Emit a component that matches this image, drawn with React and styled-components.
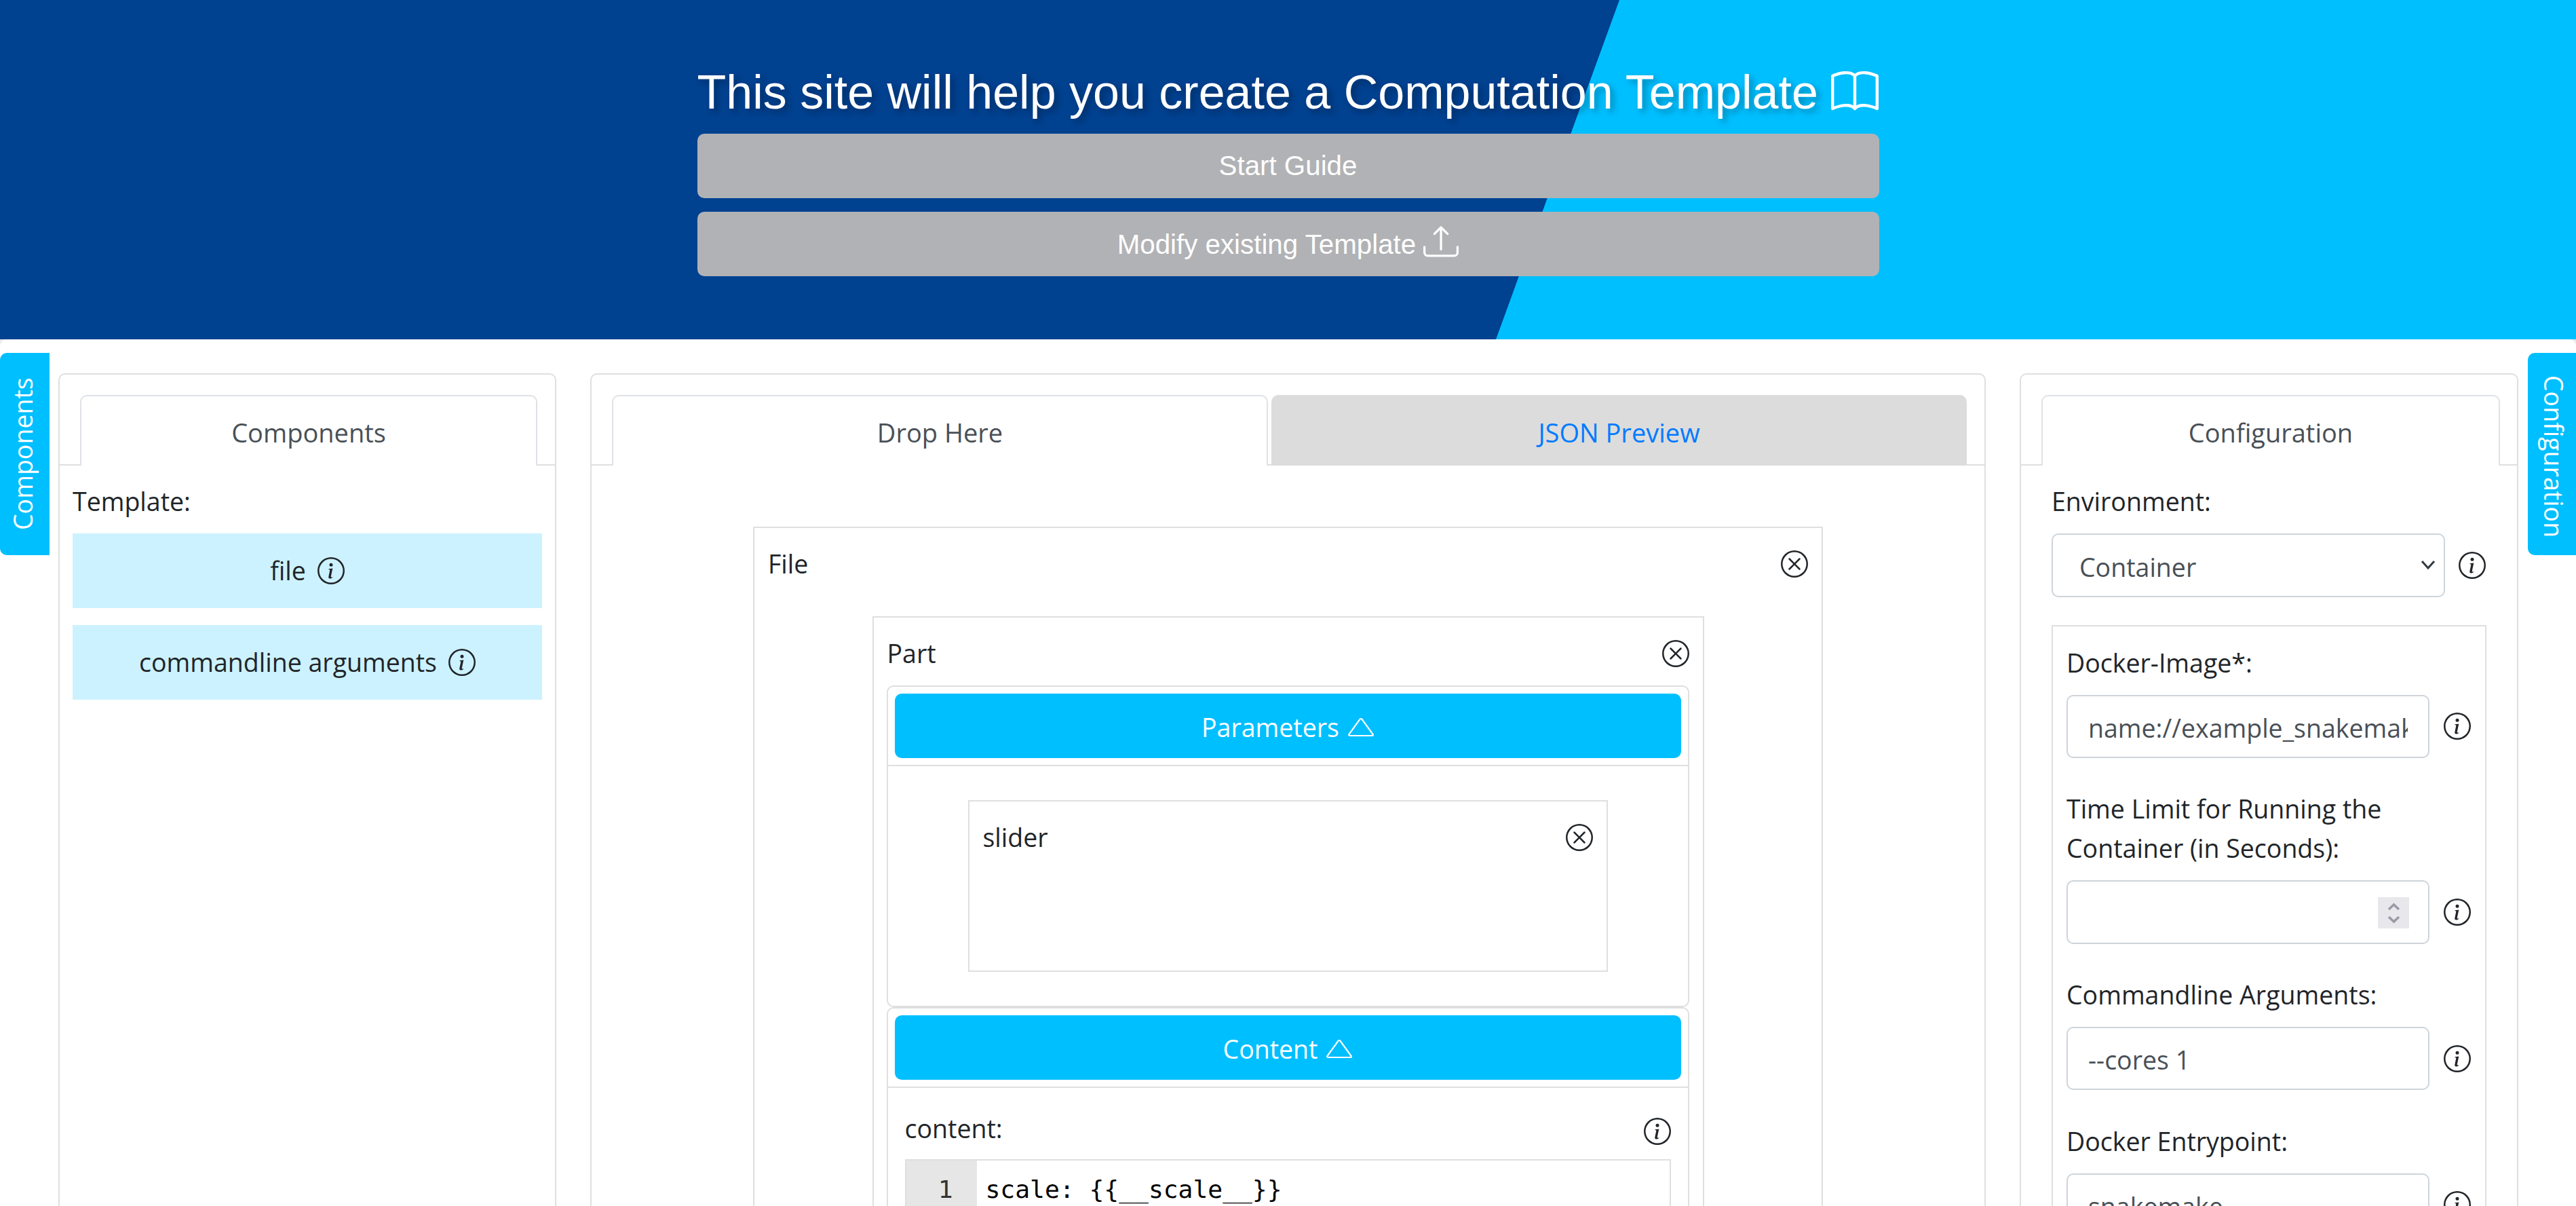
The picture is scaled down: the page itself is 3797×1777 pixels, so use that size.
import React from "react";
import styled, { createGlobalStyle } from "styled-components";

const Global = createGlobalStyle`
  html, body { margin: 0; padding: 0; background: #e9e9e9; }
  body { height: 1777px; overflow: hidden; font-family: "Open Sans", "Noto Sans", sans-serif; font-size: 37.5px; line-height: 58px; color: #212529; }
  * { box-sizing: border-box; }
`;

const INFO = (
  <>
    <path d="M8 15A7 7 0 1 1 8 1a7 7 0 0 1 0 14zm0 1A8 8 0 1 0 8 0a8 8 0 0 0 0 16z" />
    <path d="m8.93 6.588-2.29.287-.082.38.45.083c.294.07.352.176.288.469l-.738 3.468c-.194.897.105 1.319.808 1.319.545 0 1.178-.252 1.465-.598l.088-.416c-.2.176-.492.246-.686.246-.275 0-.375-.193-.304-.533L8.93 6.588zM9 4.5a1 1 0 1 1-2 0 1 1 0 0 1 2 0z" />
  </>
);
const CLOSE = (
  <>
    <path d="M8 15A7 7 0 1 1 8 1a7 7 0 0 1 0 14zm0 1A8 8 0 1 0 8 0a8 8 0 0 0 0 16z" />
    <path d="M4.646 4.646a.5.5 0 0 1 .708 0L8 7.293l2.646-2.647a.5.5 0 0 1 .708.708L8.707 8l2.647 2.646a.5.5 0 0 1-.708.708L8 8.707l-2.646 2.647a.5.5 0 0 1-.708-.708L7.293 8 4.646 5.354a.5.5 0 0 1 0-.708z" />
  </>
);
const BOOK = (
  <path d="M1 2.828c.885-.37 2.154-.769 3.388-.893 1.33-.134 2.458.063 3.112.752v9.746c-.935-.53-2.12-.603-3.213-.493-1.18.12-2.37.461-3.287.811V2.828zm7.5-.141c.654-.689 1.782-.886 3.112-.752 1.234.124 2.503.523 3.388.893v9.923c-.918-.35-2.107-.692-3.287-.81-1.094-.111-2.278-.039-3.213.492V2.687zM8 1.783C7.015.936 5.587.81 4.287.94c-1.514.153-3.042.672-3.994 1.105A.5.5 0 0 0 0 2.5v11a.5.5 0 0 0 .707.455c.882-.4 2.303-.881 3.68-1.02 1.409-.142 2.59.087 3.223.877a.5.5 0 0 0 .78 0c.633-.79 1.814-1.019 3.222-.877 1.378.139 2.8.62 3.681 1.02A.5.5 0 0 0 16 13.5v-11a.5.5 0 0 0-.293-.455c-.952-.433-2.48-.952-3.994-1.105C10.413.809 8.985.936 8 1.783z" />
);
const UPLOAD = (
  <>
    <path d="M.5 9.9a.5.5 0 0 1 .5.5v2.5a1 1 0 0 0 1 1h12a1 1 0 0 0 1-1v-2.5a.5.5 0 0 1 1 0v2.5a2 2 0 0 1-2 2H2a2 2 0 0 1-2-2v-2.5a.5.5 0 0 1 .5-.5z" />
    <path d="M7.646 1.146a.5.5 0 0 1 .708 0l3 3a.5.5 0 0 1-.708.708L8.5 2.707V11.5a.5.5 0 0 1-1 0V2.707L5.354 4.854a.5.5 0 1 1-.708-.708l3-3z" />
  </>
);

const IconSvg = styled.svg`
  width: ${(p) => p.$size}px;
  height: ${(p) => p.$size}px;
  flex: none;
  fill: currentColor;
  vertical-align: ${(p) => p.$align || "-0.125em"};
`;
const Icon = ({ size = 40, shape, align, className }) => (
  <IconSvg viewBox="0 0 16 16" $size={size} $align={align} className={className}>{shape}</IconSvg>
);

const TriangleSvg = styled.svg`
  width: 38px;
  height: 27px;
  flex: none;
  fill: currentColor;
`;
const Triangle = () => (
  <TriangleSvg viewBox="0 1 16 14" preserveAspectRatio="none">
    <path d="M7.938 2.016A.13.13 0 0 1 8.002 2a.13.13 0 0 1 .063.016.146.146 0 0 1 .054.057l6.857 11.667c.036.06.035.124.002.183a.163.163 0 0 1-.054.06.116.116 0 0 1-.066.017H1.146a.115.115 0 0 1-.066-.017.163.163 0 0 1-.054-.06.176.176 0 0 1 .002-.183L7.884 2.073a.147.147 0 0 1 .054-.057zm1.044-.45a1.13 1.13 0 0 0-1.96 0L.165 13.233c-.457.778.091 1.767.98 1.767h13.713c.889 0 1.438-.99.98-1.767L8.982 1.566z" />
  </TriangleSvg>
);

const Page = styled.div`
  width: 3797px;
  height: 1777px;
  overflow: hidden;
  position: relative;
`;

const Banner = styled.header`
  position: relative;
  height: 500px;
  background: #004190;
  padding-top: 91px;
  &::before {
    content: "";
    position: absolute;
    inset: 0;
    background: #00bfff;
    clip-path: polygon(2387px 0, 100% 0, 100% 100%, 2205px 100%);
  }
`;
const BannerInner = styled.div`
  position: relative;
  width: 1742px;
  margin: 0 auto;
  display: flex;
  flex-direction: column;
  gap: 20px;
`;
const Title = styled.h1`
  margin: 0;
  padding-top: 4px;
  height: 86px;
  font: 400 70px/82px "Liberation Sans", Arial, sans-serif;
  color: #fff;
  white-space: nowrap;
  text-shadow: 5px 5px 10px rgba(0, 0, 0, 0.3);
`;
const BannerButton = styled.button`
  height: 95px;
  border: 0;
  border-radius: 10px;
  background: #b1b2b5;
  color: #fff;
  font: 400 40.3px/58px "Liberation Sans", Arial, sans-serif;
  display: block;
  padding: 0;
`;

const Main = styled.main`
  position: relative;
  background: #fff;
  border-radius: 10px 10px 0 0;
  padding: 50px 85px 0 86px;
  display: grid;
  grid-template-columns: 734px 1fr 735px;
  column-gap: 50px;
`;

const SideTab = styled.div`
  position: absolute;
  top: 20px;
  ${(p) => (p.$right ? "right: 0;" : "left: 0;")}
  width: ${(p) => (p.$right ? 71 : 73)}px;
  height: 298px;
  padding-left: 6px;
  padding-top: ${(p) => (p.$right ? 8 : 0)}px;
  background: #00bfff;
  color: #fff;
  font-size: 37.5px;
  border-radius: ${(p) => (p.$right ? "10px 0 0 10px" : "0 10px 10px 0")};
  writing-mode: vertical-rl;
  transform: ${(p) => (p.$right ? "none" : "rotate(180deg)")};
  display: flex;
  align-items: center;
  justify-content: center;
  line-height: 1;
`;

const Panel = styled.section`
  border: 2px solid #dfdfdf;
  border-radius: 10px;
  padding-top: 30px;
  min-width: 0;
`;
const TabBar = styled.div`
  display: flex;
  gap: 5px;
  height: 104px;
  padding-left: ${(p) => p.$inset}px;
  border-bottom: 2px solid #dfdfdf;
`;
const Tab = styled.div`
  width: ${(p) => p.$width}px;
  height: 104px;
  border: 2px solid ${(p) => (p.$muted ? "#dcdcdc" : "#dee2e6")};
  border-bottom: 0;
  border-radius: 10px 10px 0 0;
  background: ${(p) => (p.$muted ? "#dcdcdc" : "#fff")};
  color: ${(p) => (p.$muted ? "#007bff" : "#495057")};
  display: flex;
  align-items: center;
  justify-content: center;
  padding-top: 4px;
  font-size: 38px;
`;

const TemplateBody = styled.div`
  padding: 24px 19px 0;
`;
const PlainLabel = styled.div`
  margin-bottom: ${(p) => p.$gap || 0}px;
`;
const Palette = styled.div`
  margin-top: 18px;
  display: flex;
  flex-direction: column;
  gap: 25px;
`;
const PaletteItem = styled.div`
  height: 110px;
  background: #ccf2ff;
  display: flex;
  align-items: center;
  justify-content: center;
  gap: 17px;
`;

const DropBody = styled.div`
  padding-top: 90px;
`;
const DropBox = styled.div`
  width: ${(p) => p.$width}px;
  margin: ${(p) => p.$margin || "0 auto"};
  border: 2px solid #dfdfdf;
  padding: 24px 20px 0;
  min-height: ${(p) => p.$min || 0}px;
`;
const BoxHead = styled.div`
  display: flex;
  align-items: center;
  justify-content: space-between;
  height: 58px;
  margin-bottom: ${(p) => p.$gap || 0}px;
`;
const Section = styled.div`
  margin-left: -1px;
  border: 2px solid #dfdfdf;
  border-radius: 10px;
`;
const SectionHead = styled.div`
  padding: 10px;
  border-bottom: 2px solid #dfdfdf;
`;
const SectionButton = styled.button`
  display: flex;
  align-items: center;
  justify-content: center;
  gap: 13px;
  width: 100%;
  height: 95px;
  border: 0;
  padding: 4px 0 0;
  border-radius: 10px;
  background: #00bfff;
  color: #fff;
  font: inherit;
`;
const SectionBodyPad = styled.div`
  padding: ${(p) => p.$padding};
`;
const Editor = styled.div`
  margin-top: 16px;
  height: 400px;
  display: flex;
  border: 2px solid #dfdfdf;
  font: 400 36.3px/56px "DejaVu Sans Mono", monospace;
  color: #000;
`;
const Gutter = styled.div`
  width: 104px;
  background: #e6e6e6;
  color: #333;
  text-align: right;
  padding: 15px 35px 0 0;
`;
const Code = styled.div`
  padding: 15px 0 0 13px;
  white-space: pre;
`;

const ConfigBody = styled.div`
  padding: 24px 45px 0;
`;
const FieldRow = styled.div`
  display: flex;
  align-items: center;
  gap: ${(p) => p.$gap}px;
`;
const FieldWrap = styled.div`
  position: relative;
  width: ${(p) => p.$width}px;
  flex: none;
`;
const fieldBase = `
  display: block;
  width: 100%;
  height: 93.5px;
  border: 2px solid #ced4da;
  border-radius: 10px;
  background: #fff;
  color: #495057;
  font: inherit;
  outline: none;
`;
const Select = styled.select`
  ${fieldBase}
  appearance: none;
  padding: 6px 60px 0 39px;
`;
const Chevron = styled.svg`
  position: absolute;
  right: 13px;
  top: 36px;
  width: 24px;
  height: 20px;
  fill: none;
  stroke: #343a40;
  stroke-width: 3;
`;
const Input = styled.input`
  ${fieldBase}
  padding: 4px 30px 0;
`;
const Spinner = styled.div`
  position: absolute;
  right: 30px;
  top: 25px;
  width: 46px;
  height: 46px;
  background: #e7e7ec;
  display: flex;
  flex-direction: column;
  align-items: center;
  justify-content: center;
  gap: 7px;
`;
const SpinArrow = styled.svg`
  width: 19px;
  height: 12px;
  fill: none;
  stroke: #9a9aa6;
  stroke-width: 3.5;
`;
const ConfigBox = styled.div`
  margin-top: 41px;
  border: 2px solid #dfdfdf;
  padding: 25px 20px;
`;
const Field = styled.div`
  margin-bottom: 46.2px;
`;
const FieldLabel = styled.div`
  margin-bottom: 18px;
`;
const ContentInfo = styled(Icon)`
  margin-top: 7px;
`;

const Info = () => <Icon shape={INFO} size={40} align="middle" />;
const Close = () => <Icon shape={CLOSE} size={40} align="middle" />;

const InputField = ({ label, value, number }) => (
  <Field>
    <FieldLabel>{label}</FieldLabel>
    <FieldRow $gap={21}>
      <FieldWrap $width={535}>
        <Input readOnly value={value} />
        {number && (
          <Spinner>
            <SpinArrow viewBox="0 0 19 12"><path d="M2 10 9.5 3 17 10" /></SpinArrow>
            <SpinArrow viewBox="0 0 19 12"><path d="M2 2 9.5 9 17 2" /></SpinArrow>
          </Spinner>
        )}
      </FieldWrap>
      <Info />
    </FieldRow>
  </Field>
);

export default function App() {
  return (
    <Page>
      <Global />
      <Banner>
        <BannerInner>
          <Title>
            This site will help you create a Computation Template <Icon shape={BOOK} size={70} align="-11px" />
          </Title>
          <BannerButton>Start Guide</BannerButton>
          <BannerButton>
            Modify existing Template <Icon shape={UPLOAD} size={52} align="-8px" />
          </BannerButton>
        </BannerInner>
      </Banner>
      <Main>
        <Panel>
          <TabBar $inset={30}>
            <Tab $width={674}>Components</Tab>
          </TabBar>
          <TemplateBody>
            <PlainLabel>Template:</PlainLabel>
            <Palette>
              <PaletteItem>file <Info /></PaletteItem>
              <PaletteItem>commandline arguments <Info /></PaletteItem>
            </Palette>
          </TemplateBody>
        </Panel>
        <Panel>
          <TabBar $inset={30}>
            <Tab $width={967}>Drop Here</Tab>
            <Tab $width={1025} $muted>JSON Preview</Tab>
          </TabBar>
          <DropBody>
            <DropBox $width={1577}>
              <BoxHead $gap={48}>
                <span>File</span>
                <Close />
              </BoxHead>
              <DropBox $width={1226}>
                <BoxHead $gap={18}>
                  <span>Part</span>
                  <Close />
                </BoxHead>
                <Section>
                  <SectionHead>
                    <SectionButton>Parameters <Triangle /></SectionButton>
                  </SectionHead>
                  <SectionBodyPad $padding="50px 118px 50px">
                    <DropBox $width={943} $min={253} $margin="0">
                      <BoxHead>
                        <span>slider</span>
                        <Close />
                      </BoxHead>
                    </DropBox>
                  </SectionBodyPad>
                </Section>
                <Section>
                  <SectionHead>
                    <SectionButton>Content <Triangle /></SectionButton>
                  </SectionHead>
                  <SectionBodyPad $padding="31px 25px 40px">
                    <BoxHead>
                      <span>content:</span>
                      <ContentInfo shape={INFO} size={40} align="middle" />
                    </BoxHead>
                    <Editor>
                      <Gutter>1</Gutter>
                      <Code>{"scale: {{__scale__}}"}</Code>
                    </Editor>
                  </SectionBodyPad>
                </Section>
              </DropBox>
            </DropBox>
          </DropBody>
        </Panel>
        <Panel>
          <TabBar $inset={30}>
            <Tab $width={676}>Configuration</Tab>
          </TabBar>
          <ConfigBody>
            <PlainLabel $gap={18}>Environment:</PlainLabel>
            <FieldRow $gap={20}>
              <FieldWrap $width={580}>
                <Select defaultValue="Container">
                  <option>Container</option>
                </Select>
                <Chevron viewBox="0 0 24 20"><path d="M3 5 12 15 21 5" /></Chevron>
              </FieldWrap>
              <Info />
            </FieldRow>
            <ConfigBox>
              <InputField label="Docker-Image*:" value="name://example_snakemake" />
              <InputField label="Time Limit for Running the Container (in Seconds):" value="" number />
              <InputField label="Commandline Arguments:" value="--cores 1" />
              <InputField label="Docker Entrypoint:" value="snakemake" />
            </ConfigBox>
          </ConfigBody>
        </Panel>
        <SideTab>Components</SideTab>
        <SideTab $right>Configuration</SideTab>
      </Main>
    </Page>
  );
}
